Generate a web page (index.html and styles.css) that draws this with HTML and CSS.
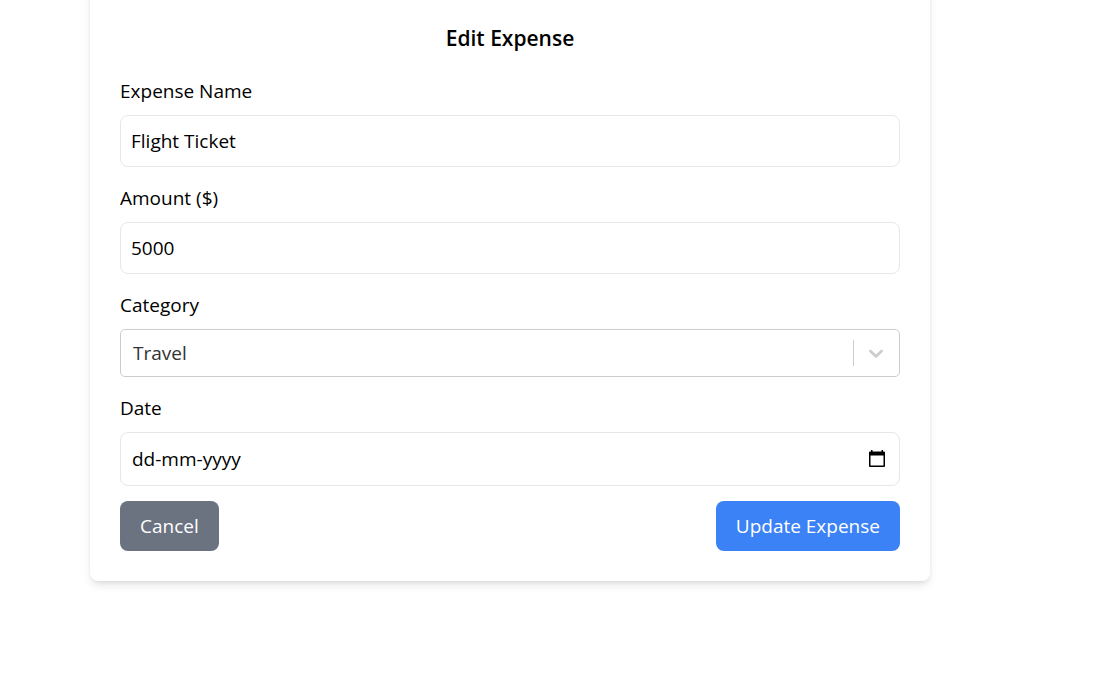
FILE: index.html
```html
<!DOCTYPE html>
<html lang="en">
<head>
<meta charset="utf-8">
<meta name="viewport" content="width=device-width, initial-scale=1">
<title>Edit Expense</title>
<link rel="stylesheet" href="styles.css">
</head>
<body>
<main class="page">
  <form class="card">
    <h2 class="title">Edit Expense</h2>
    <div class="field">
      <label class="label" for="name">Expense Name</label>
      <input class="input" id="name" type="text" value="Flight Ticket">
    </div>
    <div class="field">
      <label class="label" for="amount">Amount ($)</label>
      <input class="input" id="amount" type="text" inputmode="numeric" value="5000">
    </div>
    <div class="field">
      <label class="label" for="category">Category</label>
      <div class="control">
        <select class="select" id="category">
          <option>Travel</option>
        </select>
        <span class="indicator">
          <svg width="24" height="24" viewBox="0 0 20 20" fill="currentColor" aria-hidden="true"><path d="M4.516 7.548c0.436-0.446 1.043-0.481 1.576 0l3.908 3.747 3.908-3.747c0.533-0.481 1.141-0.446 1.574 0 0.436 0.445 0.408 1.197 0 1.615-0.406 0.418-4.695 4.502-4.695 4.502-0.217 0.223-0.502 0.335-0.787 0.335s-0.57-0.112-0.789-0.335c0 0-4.287-4.084-4.695-4.502s-0.436-1.17 0-1.615z"/></svg>
        </span>
      </div>
    </div>
    <div class="field">
      <label class="label" for="date">Date</label>
      <div class="control">
        <input class="input input-date" id="date" type="text" placeholder="dd-mm-yyyy">
        <button class="picker" type="button" aria-label="Show date picker">
          <svg width="18" height="20" viewBox="0 0 18 20" aria-hidden="true"><path fill="currentColor" fill-rule="evenodd" d="M3 1h1.500v1.500h9V1H15v1.500h1q1 0 1 1V17q0 1-1 1H2q-1 0-1-1V3.500q0-1 1-1h1zM2.500 6.500v10h13v-10z"/></svg>
        </button>
      </div>
    </div>
    <div class="actions">
      <button class="btn btn-cancel" type="button">Cancel</button>
      <button class="btn btn-update" type="submit">Update Expense</button>
    </div>
  </form>
</main>
</body>
</html>
```
FILE: styles.css
```css
* {
  box-sizing: border-box;
}

body {
  margin: 0;
  background: #fff;
  color: #000;
  font-family: "Segoe UI", "Open Sans", "Noto Sans", sans-serif;
  font-size: 19px;
  line-height: 30px;
}

.page {
  min-height: 100vh;
  padding: 0 90px;
  overflow: hidden;
}

.card {
  max-width: 840px;
  margin-top: -20px;
  padding: 40px 30px 30px;
  border-radius: 8px;
  background: #fff;
  box-shadow: 0 5px 8px -1px rgba(0, 0, 0, 0.1), 0 2px 5px -2px rgba(0, 0, 0, 0.1);
}

.title {
  margin: 0 0 20px;
  font-size: 21px;
  font-weight: 600;
  line-height: 36px;
  text-align: center;
}

.field {
  margin-bottom: 16px;
}

.label {
  display: block;
  margin-bottom: 9px;
}

.input,
.select {
  display: block;
  width: 100%;
  margin: 0;
  border: 1px solid #e5e7eb;
  border-radius: 8px;
  background: #fff;
  color: inherit;
  font: inherit;
}

.input {
  padding: 10px;
}

.input::placeholder {
  color: #000;
  opacity: 1;
}

.control {
  display: grid;
  align-items: center;
}

.control > * {
  grid-area: 1 / 1;
}

.select {
  height: 48px;
  padding: 0 12px;
  border-color: #ccc;
  border-radius: 5px;
  color: #333;
  appearance: none;
}

.indicator {
  display: flex;
  justify-self: end;
  margin-right: 1px;
  padding: 1px 11px 1px 10px;
  border-left: 1px solid #ccc;
  color: #ccc;
  pointer-events: none;
}

.input-date {
  padding: 11px;
}

.picker {
  display: flex;
  justify-self: end;
  margin: 0 14px 0 0;
  padding: 0;
  border: 0;
  background: none;
  color: #000;
}

.actions {
  display: flex;
  justify-content: space-between;
  margin-top: -1px;
}

.btn {
  padding: 10px 20px;
  border: 0;
  border-radius: 8px;
  color: #fff;
  font: inherit;
}

.btn-cancel {
  background: #6b7280;
}

.btn-update {
  background: #3b82f6;
}
```
